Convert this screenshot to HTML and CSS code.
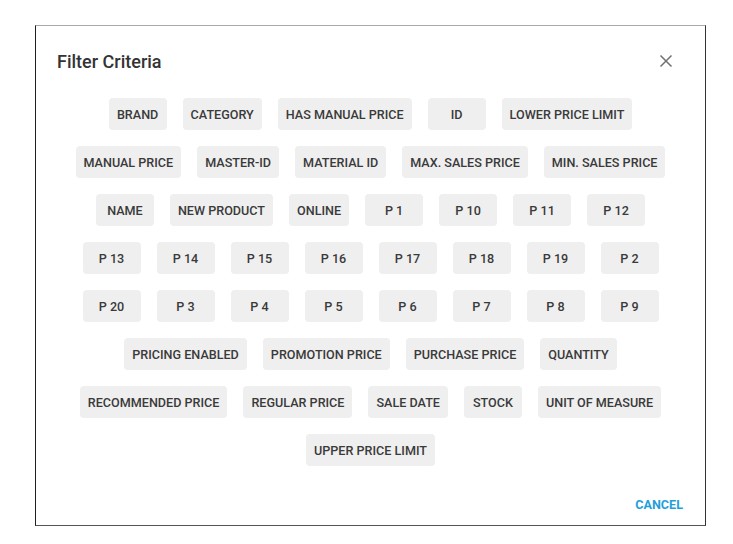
FILE: index.html
```html
<!DOCTYPE html>
<html>
<head>
<meta charset="utf-8">
<link rel="stylesheet" href="styles.css">
</head>
<body>
<div class="dialog">
  <div class="header">
    <h2 class="title">Filter Criteria</h2>
    <button class="close" aria-label="Close">
      <svg width="14" height="14" viewBox="0 0 14 14"><path d="M1.5 1.5 L12.5 12.5 M12.5 1.5 L1.5 12.5" stroke="#707070" stroke-width="1.5" fill="none"/></svg>
    </button>
  </div>
  <div class="chips">
    <span class="chip">BRAND</span>
    <span class="chip">CATEGORY</span>
    <span class="chip">HAS MANUAL PRICE</span>
    <span class="chip">ID</span>
    <span class="chip">LOWER PRICE LIMIT</span>
    <span class="chip">MANUAL PRICE</span>
    <span class="chip">MASTER-ID</span>
    <span class="chip">MATERIAL ID</span>
    <span class="chip">MAX. SALES PRICE</span>
    <span class="chip">MIN. SALES PRICE</span>
    <span class="chip">NAME</span>
    <span class="chip">NEW PRODUCT</span>
    <span class="chip">ONLINE</span>
    <span class="chip">P 1</span>
    <span class="chip">P 10</span>
    <span class="chip">P 11</span>
    <span class="chip">P 12</span>
    <span class="chip">P 13</span>
    <span class="chip">P 14</span>
    <span class="chip">P 15</span>
    <span class="chip">P 16</span>
    <span class="chip">P 17</span>
    <span class="chip">P 18</span>
    <span class="chip">P 19</span>
    <span class="chip">P 2</span>
    <span class="chip">P 20</span>
    <span class="chip">P 3</span>
    <span class="chip">P 4</span>
    <span class="chip">P 5</span>
    <span class="chip">P 6</span>
    <span class="chip">P 7</span>
    <span class="chip">P 8</span>
    <span class="chip">P 9</span>
    <span class="chip">PRICING ENABLED</span>
    <span class="chip">PROMOTION PRICE</span>
    <span class="chip">PURCHASE PRICE</span>
    <span class="chip">QUANTITY</span>
    <span class="chip">RECOMMENDED PRICE</span>
    <span class="chip">REGULAR PRICE</span>
    <span class="chip">SALE DATE</span>
    <span class="chip">STOCK</span>
    <span class="chip">UNIT OF MEASURE</span>
    <span class="chip">UPPER PRICE LIMIT</span>
  </div>
  <div class="actions">
    <button class="cancel">CANCEL</button>
  </div>
</div>
</body>
</html>
```

FILE: styles.css
```css
html, body {
  margin: 0;
  padding: 0;
  background: #ffffff;
}
body {
  font-family: Roboto, "Liberation Sans", sans-serif;
  color: #333333;
}
.dialog {
  box-sizing: border-box;
  margin: 25px 0 0 35px;
  width: 671px;
  height: 501px;
  border-style: solid;
  border-width: 1px;
  border-color: #a8a8a8 #333333 #555555 #1f1f1f;
  padding: 24px 24px 3px 24px;
  display: flex;
  flex-direction: column;
  background: #fff;
}
.header {
  display: flex;
  align-items: center;
  justify-content: space-between;
  height: 24px;
}
.title {
  margin: 0 0 0 -3px;
  font-size: 18px;
  font-weight: 500;
  line-height: 24px;
  color: #333333;
}
.close {
  border: none;
  background: none;
  padding: 0;
  width: 14px;
  height: 14px;
  margin: -2px 8px 0 0;
  display: flex;
  cursor: pointer;
}
.chips {
  margin-top: 16px;
  display: flex;
  flex-wrap: wrap;
  justify-content: center;
}
.chip {
  box-sizing: border-box;
  margin: 8px;
  height: 32px;
  min-width: 58px;
  padding: 0 8px;
  display: inline-flex;
  align-items: center;
  justify-content: center;
  background: #efefef;
  border-radius: 4px;
  font-size: 12.6px;
  font-weight: 500;
  color: #3a3a3a;
  white-space: nowrap;
}
.actions {
  margin-top: auto;
  display: flex;
  justify-content: flex-end;
  height: 36px;
  align-items: center;
}
.cancel {
  border: none;
  background: none;
  font-family: Roboto, "Liberation Sans", sans-serif;
  font-size: 12.6px;
  font-weight: 700;
  color: #1fa0db;
  padding: 0 6px;
  margin-right: -8px;
  height: 36px;
  cursor: pointer;
}
```
